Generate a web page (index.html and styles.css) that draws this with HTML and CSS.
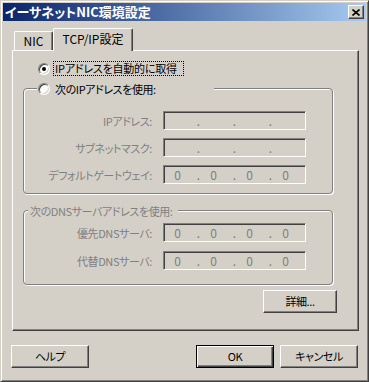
FILE: index.html
```html
<!DOCTYPE html>
<html lang="ja">
<head>
    <meta charset="UTF-8">
    <title>イーサネットNIC環境設定</title>
    <link rel="stylesheet" href="styles.css">
</head>
<body>

    <div class="window">
        <div class="titlebar">
            <span class="title">イーサネットNIC環境設定</span>
            <div class="close">
                <svg width="8" height="7" viewBox="0 0 8 7">
                    <path d="M0.5 0.5 L7.5 6.5 M7.5 0.5 L0.5 6.5" stroke="#000" stroke-width="1.6" fill="none"/>
                </svg>
            </div>
        </div>

        <div class="tabs">
            <div class="tab">NIC</div>
            <div class="tab active">TCP/IP設定</div>
        </div>

        <div class="panel">
            <div class="radio-row">
                <span class="radio checked"></span>
                <span class="focus">IPアドレスを自動的に取得</span>
            </div>

            <!-- 固定IP -->
            <div class="group ip-group">
                <div class="legend">
                    <span class="radio"></span>
                    <span class="legend-text">次のIPアドレスを使用:</span>
                </div>
                <div class="row">
                    <span class="label">IPアドレス:</span>
                    <div class="ipfield">
                        <span class="v"></span><span class="d">.</span>
                        <span class="v"></span><span class="d">.</span>
                        <span class="v"></span><span class="d">.</span>
                        <span class="v"></span>
                    </div>
                </div>
                <div class="row">
                    <span class="label">サブネットマスク:</span>
                    <div class="ipfield">
                        <span class="v"></span><span class="d">.</span>
                        <span class="v"></span><span class="d">.</span>
                        <span class="v"></span><span class="d">.</span>
                        <span class="v"></span>
                    </div>
                </div>
                <div class="row">
                    <span class="label">デフォルトゲートウェイ:</span>
                    <div class="ipfield">
                        <span class="v">0</span><span class="d">.</span>
                        <span class="v">0</span><span class="d">.</span>
                        <span class="v">0</span><span class="d">.</span>
                        <span class="v">0</span>
                    </div>
                </div>
            </div>

            <!-- DNS -->
            <div class="group dns-group">
                <div class="legend dns-legend">次のDNSサーバアドレスを使用:</div>
                <div class="row">
                    <span class="label">優先DNSサーバ:</span>
                    <div class="ipfield">
                        <span class="v">0</span><span class="d">.</span>
                        <span class="v">0</span><span class="d">.</span>
                        <span class="v">0</span><span class="d">.</span>
                        <span class="v">0</span>
                    </div>
                </div>
                <div class="row">
                    <span class="label">代替DNSサーバ:</span>
                    <div class="ipfield">
                        <span class="v">0</span><span class="d">.</span>
                        <span class="v">0</span><span class="d">.</span>
                        <span class="v">0</span><span class="d">.</span>
                        <span class="v">0</span>
                    </div>
                </div>
            </div>

            <div class="detail-row">
                <div class="btn detail">詳細...</div>
            </div>
        </div>

        <div class="footer">
            <div class="btn">ヘルプ</div>
            <div class="spacer"></div>
            <div class="btn default">OK</div>
            <div class="btn">キャンセル</div>
        </div>
    </div>

</body>
</html>
```

FILE: styles.css
```css
body {
    margin: 0;
    background-color: #d4d0c8;
    font-family: "Noto Sans CJK JP", "Liberation Sans", sans-serif;
    font-size: 11px;
    letter-spacing: -0.4px;
    font-feature-settings: "palt";
    color: #000;
}

.window {
    width: 369px;
    height: 382px;
    box-sizing: border-box;
    border: 1px solid;
    border-color: #d4d0c8 #404040 #404040 #d4d0c8;
    box-shadow: inset 1px 1px #fff, inset -1px -1px #808080;
    padding: 2px;
    background-color: #d4d0c8;
}

.titlebar {
    height: 18px;
    display: flex;
    align-items: center;
    justify-content: space-between;
    padding: 0 2px 0 2px;
    background: linear-gradient(90deg, #0a246a, #a6caf0);
}

.title {
    color: #fff;
    font-weight: bold;
    font-size: 13px;
    letter-spacing: 0;
    line-height: 18px;
}

.close {
    width: 16px;
    height: 14px;
    box-sizing: border-box;
    border: 1px solid;
    border-color: #fff #404040 #404040 #fff;
    box-shadow: inset -1px -1px #808080;
    background-color: #d4d0c8;
    display: flex;
    align-items: center;
    justify-content: center;
}

.close svg {
    display: block;
    margin-left: -1px;
}

.tabs {
    display: flex;
    align-items: flex-end;
    height: 23px;
    margin: 7px 0 -1px 11px;
    position: relative;
    z-index: 1;
}

.tab {
    width: 39px;
    height: 19px;
    box-sizing: border-box;
    margin-bottom: 1px;
    font-size: 12px;
    letter-spacing: 0;
    line-height: 17px;
    text-align: center;
    border-left: 1px solid #fff;
    border-top: 1px solid #fff;
    border-right: 1px solid #404040;
    border-radius: 2px 2px 0 0;
    box-shadow: inset -1px 0 #808080;
    background-color: #d4d0c8;
}

.tab.active {
    width: 80px;
    height: 23px;
    margin-bottom: 0;
    line-height: 19px;
}

.panel {
    margin: 0 7px 0 9px;
    border: 1px solid;
    border-color: #fff #404040 #404040 #fff;
    box-shadow: inset -1px -1px #808080;
    padding: 10px 0 17px 0;
}

.radio-row {
    display: flex;
    align-items: center;
    height: 15px;
    padding-left: 25px;
}

.radio {
    width: 12px;
    height: 12px;
    box-sizing: border-box;
    border-radius: 50%;
    border: 1px solid;
    border-color: #808080 #fff #fff #808080;
    box-shadow: inset 1px 1px #404040, inset -1px -1px #d4d0c8;
    background-color: #fff;
    display: flex;
    align-items: center;
    justify-content: center;
    flex-shrink: 0;
}

.radio.checked::after {
    content: "";
    width: 4px;
    height: 4px;
    border-radius: 50%;
    background-color: #000;
}

.focus {
    margin-left: 3px;
    padding: 0 6px 0 1px;
    height: 15px;
    line-height: 13px;
    letter-spacing: -0.2px;
    white-space: nowrap;
    box-sizing: border-box;
    border: 1px dotted #000;
}

.group {
    position: relative;
    width: 310px;
    box-sizing: border-box;
    margin-left: 10px;
    border: 1px solid #808080;
    border-radius: 4px;
    box-shadow: 1px 1px #fff, inset 1px 1px #fff;
    display: flex;
    flex-direction: column;
}

.ip-group {
    margin-top: 12px;
    padding: 22px 0 9px 0;
    gap: 8px;
}

.dns-group {
    margin-top: 16px;
    padding: 12px 0 14px 0;
    gap: 9px;
}

.legend {
    position: absolute;
    top: -9px;
    left: 13px;
    width: 177px;
    height: 17px;
    box-sizing: border-box;
    padding-left: 1px;
    display: flex;
    align-items: center;
    white-space: nowrap;
    background-color: #d4d0c8;
}

.legend-text {
    margin-left: 5px;
}

.dns-legend {
    left: 4px;
    width: auto;
    padding: 0 5px 0 2px;
    color: #808080;
}

.row {
    display: flex;
    align-items: center;
    height: 19px;
}

.label {
    width: 128px;
    text-align: right;
    white-space: nowrap;
    color: #808080;
    margin-right: 11px;
}

.ipfield {
    width: 143px;
    height: 19px;
    box-sizing: border-box;
    border: 1px solid;
    border-color: #808080 #fff #fff #808080;
    box-shadow: inset 1px 1px #404040, inset -1px -1px #d4d0c8;
    display: flex;
    color: #808080;
    font-size: 12px;
    letter-spacing: 0;
    line-height: 17px;
}

.ipfield .v {
    width: 27px;
    text-align: center;
}

.ipfield .d {
    width: 9px;
    text-align: right;
}

.detail-row {
    display: flex;
    justify-content: flex-end;
    margin: 5px 21px 0 0;
}

.btn {
    width: 78px;
    height: 23px;
    box-sizing: border-box;
    border: 1px solid;
    border-color: #fff #404040 #404040 #fff;
    box-shadow: inset -1px -1px #808080;
    background-color: #d4d0c8;
    text-align: center;
    line-height: 20px;
}

.btn.detail {
    width: 74px;
}

.btn.default {
    border-color: #000;
    box-shadow: inset 1px 1px #fff, inset -1px -1px #404040, inset -2px -2px #808080;
}

.footer {
    display: flex;
    gap: 6px;
    margin-top: 14px;
    padding: 0 8px 0 8px;
}

.spacer {
    flex: 1;
}
```
